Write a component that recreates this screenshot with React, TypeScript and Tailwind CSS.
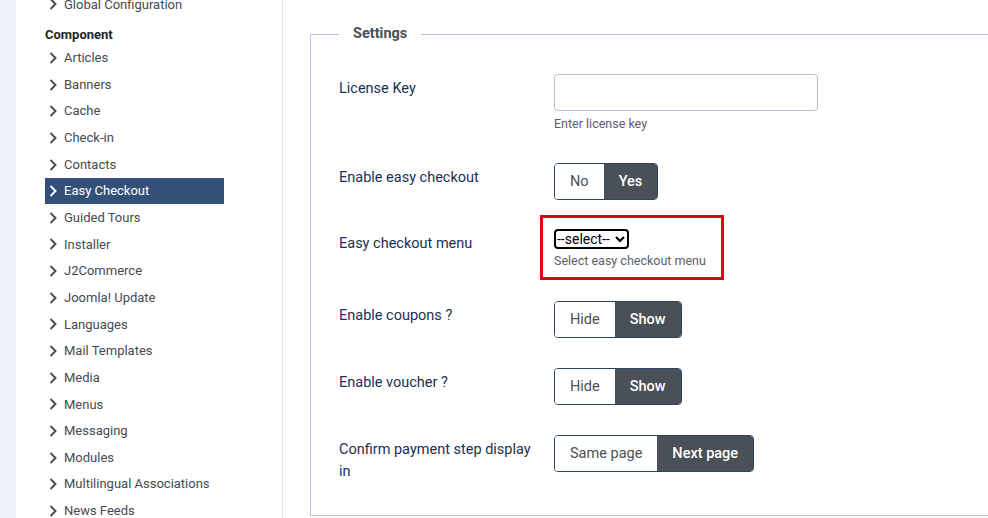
const components = [
  "Articles",
  "Banners",
  "Cache",
  "Check-in",
  "Contacts",
  "Easy Checkout",
  "Guided Tours",
  "Installer",
  "J2Commerce",
  "Joomla! Update",
  "Languages",
  "Mail Templates",
  "Media",
  "Menus",
  "Messaging",
  "Modules",
  "Multilingual Associations",
  "News Feeds",
];

const Chevron = () => (
  <svg width="8" height="12" viewBox="0 0 8 12" className="ml-[4px] mr-[7px] shrink-0">
    <path d="M1.5 1 L6.5 6 L1.5 11" fill="none" stroke="currentColor" strokeWidth="1.9" />
  </svg>
);

const SidebarItem = ({ name, active }: { name: string; active?: boolean }) => (
  <li
    className={
      active
        ? "flex items-center h-[26.65px] bg-[#33507a] text-white"
        : "flex items-center h-[26.65px] text-[#454b52]"
    }
  >
    <Chevron />
    <span>{name}</span>
  </li>
);

const Toggle = ({ options, selected }: { options: string[]; selected: number }) => (
  <div className="inline-flex h-[37px] rounded-[4px] border border-[#2e4360] overflow-hidden text-[14.5px]">
    {options.map((o, i) => (
      <span
        key={o}
        className={
          i === selected
            ? "flex items-center px-[15px] bg-[#495057] text-white font-medium"
            : "flex items-center px-[15px] bg-white text-[#495057]"
        }
      >
        {o}
      </span>
    ))}
  </div>
);

const Row = ({
  label,
  children,
  className,
}: {
  label: string;
  children: React.ReactNode;
  className?: string;
}) => (
  <div className={"flex " + (className ?? "")}>
    <div className="w-[215px] pr-[15px] pt-[4px] leading-[22px] text-[14.5px] text-[#1c2f52]">{label}</div>
    <div>{children}</div>
  </div>
);

export default function App() {
  return (
    <div className="flex h-[518px] w-[988px] overflow-hidden bg-white font-[Roboto,sans-serif]">
      {/* left strip */}
      <div className="w-[16px] shrink-0 bg-[#eef2f9]" />

      {/* sidebar */}
      <aside className="w-[267px] shrink-0 border-r border-[#dfe2e6] bg-white pl-[29px]">
        <ul className="mt-[-9px] w-[179px] text-[13px]">
          <SidebarItem name="Global Configuration" />
        </ul>
        <h3 className="mt-[7px] h-[20px] leading-[20px] text-[13px] font-bold text-[#22262a]">Component</h3>
        <ul className="w-[179px] text-[13px]">
          {components.map((c) => (
            <SidebarItem key={c} name={c} active={c === "Easy Checkout"} />
          ))}
        </ul>
      </aside>

      {/* main */}
      <main className="flex-1 min-w-0 overflow-hidden">
        <fieldset className="ml-[27px] mt-[23px] w-[760px] border border-[#b9c4d4] pl-[28px] pt-[29px] pb-[32px]">
          <legend className="px-[14px] leading-[22px] text-[14.5px] font-bold text-[#4a4f55]">Settings</legend>

          <Row label="License Key">
            <input className="block h-[37px] w-[264px] rounded-[4px] border border-[#b5c0ce] bg-white" />
            <div className="mt-[4px] leading-[18px] text-[12.5px] text-[#5a6068]">Enter license key</div>
          </Row>

          <Row label="Enable easy checkout" className="mt-[30px]">
            <Toggle options={["No", "Yes"]} selected={1} />
          </Row>

          <Row label="Easy checkout menu" className="mt-[29px]">
            <div className="relative">
              <div className="absolute left-[-14px] top-[-14px] h-[65px] w-[184px] border-[3px] border-[#e60012] pointer-events-none" />
              <div className="flex h-[20px] w-[75px] items-center rounded-[4px] border-2 border-black bg-white pl-[1px]">
                <select className="appearance-none bg-transparent text-[14px] leading-[16px] text-black outline-none">
                  <option>--select--</option>
                </select>
                <svg width="10" height="8" viewBox="0 0 10 8" className="ml-[5px]">
                  <path d="M1 2 L5 6 L9 2" fill="none" stroke="black" strokeWidth="2.2" />
                </svg>
              </div>
              <div className="mt-[3px] leading-[18px] text-[12.5px] text-[#5a6068]">Select easy checkout menu</div>
            </div>
          </Row>

          <Row label="Enable coupons ?" className="mt-[31px]">
            <Toggle options={["Hide", "Show"]} selected={1} />
          </Row>

          <Row label="Enable voucher ?" className="mt-[30px]">
            <Toggle options={["Hide", "Show"]} selected={1} />
          </Row>

          <Row label="Confirm payment step display in" className="mt-[30px]">
            <Toggle options={["Same page", "Next page"]} selected={1} />
          </Row>
        </fieldset>
      </main>
    </div>
  );
}
